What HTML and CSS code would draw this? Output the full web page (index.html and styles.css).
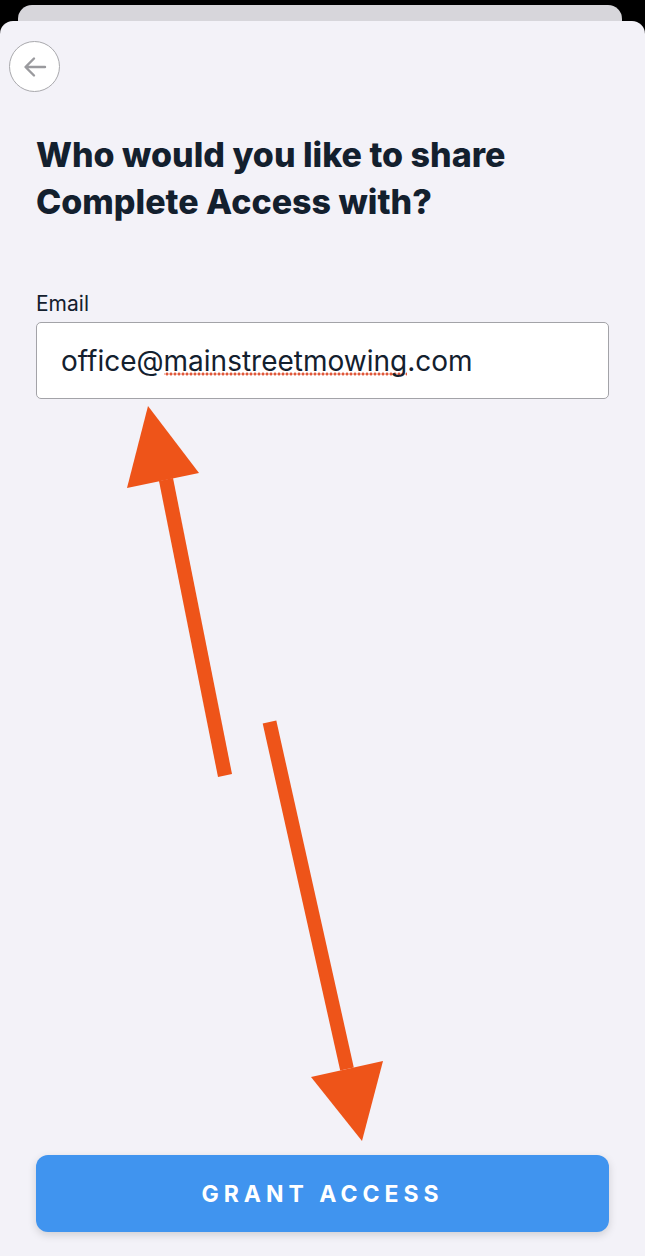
FILE: index.html
```html
<!DOCTYPE html>
<html lang="en">
<head>
  <meta charset="UTF-8" />
  <meta name="viewport" content="width=device-width, initial-scale=1.0"/>
  <title>Share Complete Access</title>
  <link rel="stylesheet" href="styles.css">
</head>
<body>
  <div class="back-card"></div>

  <div class="sheet">
    <button class="back-btn" aria-label="Back">
      <svg width="26" height="26" viewBox="0 0 26 26">
        <path d="M23 13H4M12 4.5L3.5 13L12 21.5" fill="none" stroke="#9a9a9e" stroke-width="2.4" stroke-linecap="round" stroke-linejoin="round"/>
      </svg>
    </button>

    <h1 class="title">Who would you like to share<br>Complete Access with?</h1>

    <label class="label">Email</label>
    <div class="field">office@<span class="typo">mainstreetmowing</span>.com</div>

    <button class="grant-btn">GRANT ACCESS</button>
  </div>

  <!-- annotation arrows drawn over the screenshot -->
  <svg class="arrows" width="645" height="1256" viewBox="0 0 645 1256">
    <polygon points="218,777 232,774 173,478 159,481" fill="#ee5419"/>
    <polygon points="148,406 127,488 199,473" fill="#ee5419"/>
    <polygon points="262.7,723.5 276.3,720.5 353.8,1067.5 340.2,1070.5" fill="#ee5419"/>
    <polygon points="311,1077 383,1061 362,1141" fill="#ee5419"/>
  </svg>
</body>
</html>
```

FILE: styles.css
```css
html, body {
  margin: 0;
  height: 100%;
}
body {
  position: relative;
  background: #000;
  font-family: 'Inter', sans-serif;
  overflow: hidden;
}
.back-card {
  height: 16px;
  margin: 5px 23px 0 18px;
  background: #d7d6db;
  border-radius: 14px 14px 0 0;
}
.sheet {
  display: flex;
  flex-direction: column;
  align-items: flex-start;
  height: 1235px;
  box-sizing: border-box;
  padding: 20px 36px 24px 36px;
  background: #f3f2f8;
  border-radius: 13px 13px 0 0;
}
.back-btn {
  width: 51px;
  height: 51px;
  margin-left: -27px;
  padding: 0;
  border: 1.5px solid #a9a9ad;
  border-radius: 50%;
  background: #fff;
  display: flex;
  align-items: center;
  justify-content: center;
}
.title {
  margin: 39px 0 0;
  font-size: 34px;
  line-height: 47px;
  font-weight: 800;
  color: #13202e;
}
.label {
  margin-top: 67px;
  font-size: 21px;
  line-height: 24px;
  color: #13202e;
}
.field {
  width: 100%;
  height: 77px;
  margin-top: 6px;
  box-sizing: border-box;
  padding: 0 24px;
  display: flex;
  align-items: center;
  background: #fff;
  border: 1.5px solid #a3a3a8;
  border-radius: 5px;
  font-size: 28px;
  color: #13202e;
}
/* spell-check squiggle: row of round red dots */
.typo {
  background-image: radial-gradient(circle, #e0583a 1.4px, transparent 1.7px);
  background-size: 4px 4px;
  background-repeat: repeat-x;
  background-position: 1px calc(100% - 2px);
}
.grant-btn {
  width: 100%;
  height: 77px;
  margin-top: auto;
  border: none;
  border-radius: 12px;
  background: #4094ef;
  color: #fff;
  font-family: 'Inter', sans-serif;
  font-size: 23px;
  font-weight: 700;
  letter-spacing: 5px;
  box-shadow: 0 3px 8px rgba(0,0,0,0.15);
}
.arrows {
  position: absolute;
  top: 0;
  left: 0;
  pointer-events: none;
}
```
